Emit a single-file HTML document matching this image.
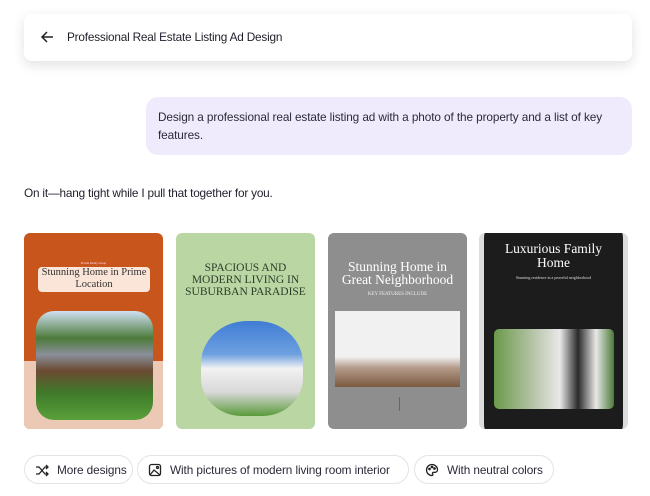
<!DOCTYPE html>
<html><head><meta charset="utf-8"><style>
*{margin:0;padding:0;box-sizing:border-box}
body{width:650px;height:496px;background:#fff;font-family:"Liberation Sans",sans-serif;color:#1f1f2b;position:relative;overflow:hidden}
.abs{position:absolute}
.hdr{left:24px;top:14px;width:608px;height:47px;background:#fff;border-radius:8px;box-shadow:0 4px 12px rgba(0,0,0,.12)}
.bub{left:146px;top:97px;width:486px;height:58px;background:#f0ebfc;border-radius:12px;padding:11px 12px;font-size:11.8px;line-height:18px;color:#2a2a38;letter-spacing:-0.1px}
.card{top:233px;height:196px;border-radius:6px;overflow:hidden}
.serif{font-family:"Liberation Serif",serif;text-align:center}
.chip{top:455px;height:29px;border:1px solid #e3e3e8;border-radius:15px;font-size:11.8px;display:flex;align-items:center;padding-left:10px;gap:8px;color:#2a2a38;letter-spacing:-0.1px}
.tiny{font-size:3px;color:#ddd}
</style></head><body>
<div class="abs hdr">
<svg class="abs" style="left:16px;top:16px" width="14" height="14" viewBox="0 0 14 14"><path d="M13 7H2M7 2L2 7l5 5" stroke="#222" stroke-width="1.5" fill="none"/></svg>
<div class="abs" style="left:43px;top:16px;font-size:11.8px;letter-spacing:-0.2px">Professional Real Estate Listing Ad Design</div>
</div>
<div class="abs bub">Design a professional real estate listing ad with a photo of the property and a list of key features.</div>
<div class="abs" style="left:24px;top:186px;font-size:11.8px;letter-spacing:-0.2px">On it—hang tight while I pull that together for you.</div>

<div class="abs card" style="left:24px;width:139px;background:#c8561c">
<div class="abs" style="left:0;top:128px;width:139px;height:70px;background:#ecc9b5"></div>
<div class="abs serif" style="left:0;top:28px;width:139px;font-size:3px;color:#fde">Prestin Realty Group</div>
<div class="abs serif" style="left:14px;top:34px;width:112px;height:25px;background:#fbe5d8;border-radius:4px;font-size:10.5px;line-height:12px;color:#333">Stunning Home in Prime Location</div>
<div class="abs" style="left:12px;top:78px;width:117px;height:109px;border-radius:18px;background:linear-gradient(#cfe0f2 0%,#4d7a3a 25%,#8a8f99 40%,#6b4a32 55%,#3f7a2a 75%,#59a03a 100%)"></div>
</div>
<div class="abs card" style="left:176px;width:139px;background:#b9d6a3">
<div class="abs serif" style="left:0;top:29px;width:139px;font-size:11.5px;line-height:12px;color:#2f3d2a">SPACIOUS AND<br>MODERN LIVING IN<br>SUBURBAN PARADISE</div>
<div class="abs" style="left:25px;top:88px;width:102px;height:95px;border-radius:45% 45% 40% 40%;background:linear-gradient(#3f7dd4 0%,#6ea0e0 35%,#f2f2f2 50%,#d8d8d8 75%,#5a9a3a 100%)"></div>
</div>
<div class="abs card" style="left:328px;width:139px;background:#8e8e8e">
<div class="abs serif" style="left:0;top:27px;width:139px;font-size:13.5px;line-height:13px;color:#fff">Stunning Home in<br>Great Neighborhood</div>
<div class="abs serif" style="left:0;top:59px;width:139px;font-size:5px;color:#eee">KEY FEATURES INCLUDE</div>
<div class="abs" style="left:7px;top:78px;width:125px;height:76px;background:linear-gradient(#f1f1f1 60%,#b49a8a 75%,#7a5a40 100%)"></div>
<div class="abs" style="left:71px;top:164px;width:1px;height:14px;background:#666"></div>
</div>
<div class="abs card" style="left:479px;width:149px;background:#1c1c1c;border-left:5px solid #ddd;border-right:5px solid #ddd">
<div class="abs serif" style="left:0;top:9px;width:139px;font-size:13.5px;line-height:14px;color:#fff">Luxurious Family<br>Home</div>
<div class="abs serif" style="left:0;top:42px;width:139px;font-size:4px;color:#ddd">Stunning residence in a peaceful neighborhood</div>
<div class="abs" style="left:10px;top:96px;width:120px;height:80px;border-radius:5px;background:linear-gradient(90deg,#6a9a4a 0%,#b0c0a0 30%,#e8e8e8 55%,#2a2a2a 70%,#e8e8e8 85%,#4a7a3a 100%)"></div>
</div>

<div class="abs chip" style="left:24px;width:109px">
<svg width="14" height="14" viewBox="0 0 14 14" fill="none" stroke="#222" stroke-width="1.3"><path d="M1 4h3l6 7h3M1 11h3l6-7h3M11 2l2 2-2 2M11 9l2 2-2 2"/></svg>More designs</div>
<div class="abs chip" style="left:137px;width:272px">
<svg width="14" height="14" viewBox="0 0 14 14" fill="none" stroke="#222" stroke-width="1.3"><rect x="1.5" y="1.5" width="11" height="11" rx="2"/><path d="M2 12l4-5 6 5"/><circle cx="9.5" cy="4.5" r="1"/></svg>With pictures of modern living room interior</div>
<div class="abs chip" style="left:414px;width:140px">
<svg width="14" height="14" viewBox="0 0 14 14" fill="none" stroke="#222" stroke-width="1.3"><path d="M7 1.5a5.5 5.5 0 1 0 0 11c1 0 1-1 .6-1.6-.5-.8 0-1.6 1-1.6h1.6a2.5 2.5 0 0 0 2.3-2.6C12.5 3.8 10 1.5 7 1.5z"/><circle cx="4.5" cy="6" r=".7"/><circle cx="7" cy="4" r=".7"/><circle cx="9.5" cy="5.5" r=".7"/></svg>With neutral colors</div>
</body></html>
